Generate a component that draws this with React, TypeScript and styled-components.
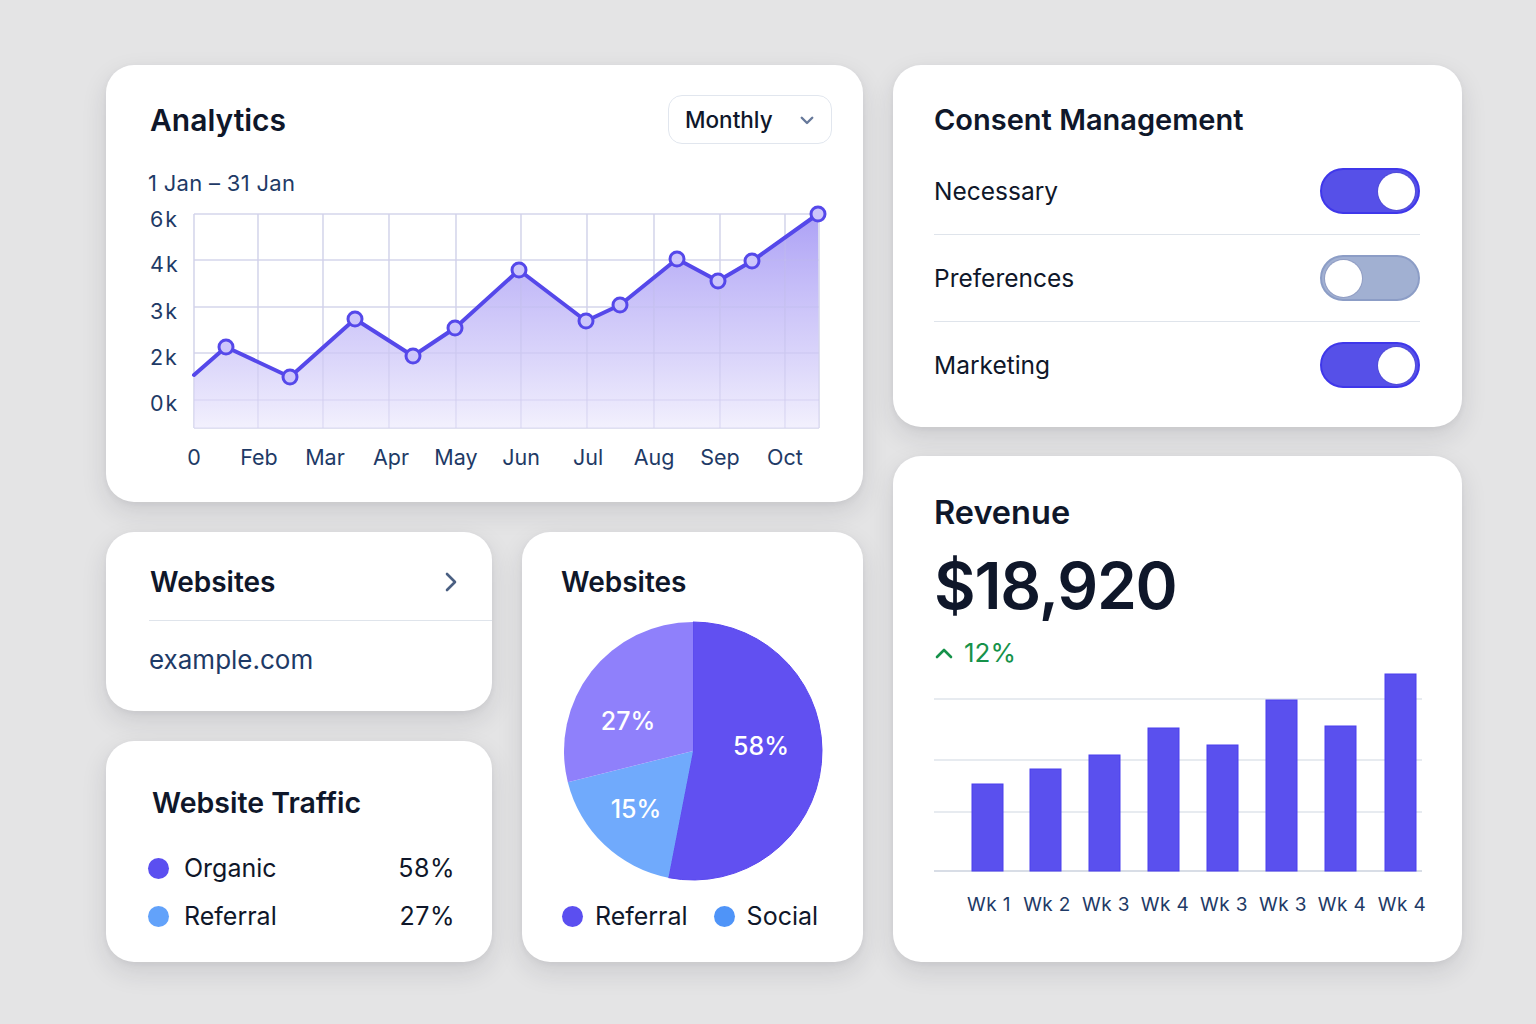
import React from "react";
import styled, { createGlobalStyle } from "styled-components";

const GlobalStyle = createGlobalStyle`
  html, body { margin: 0; padding: 0; }
  body {
    background: #e4e4e5;
    font-family: Inter, "Noto Sans", "Liberation Sans", sans-serif;
    color: #0f172a;
  }
  #root { min-height: 1024px; }
`;

const Page = styled.div`
  display: flex;
  gap: 30px;
  padding: 65px 0 0 106px;
  box-sizing: border-box;
  width: 1536px;
  height: 1024px;
`;

const Column = styled.div<{ $width: number; $gap: number }>`
  display: flex;
  flex-direction: column;
  width: ${(p) => p.$width}px;
  gap: ${(p) => p.$gap}px;
`;

const Row = styled.div<{ $gap: number }>`
  display: flex;
  gap: ${(p) => p.$gap}px;
`;

const Card = styled.div<{ $height: number; $width?: number }>`
  background: #ffffff;
  border-radius: 28px;
  box-shadow: 0 10px 26px rgba(30, 30, 50, 0.12), 0 2px 6px rgba(30, 30, 50, 0.05);
  height: ${(p) => p.$height}px;
  width: ${(p) => (p.$width ? `${p.$width}px` : "auto")};
  box-sizing: border-box;
  display: flex;
  flex-direction: column;
  overflow: hidden;
`;

const Title = styled.h2<{ $size?: number }>`
  margin: 0;
  font-size: ${(p) => p.$size ?? 29}px;
  font-weight: 600;
  color: #0f172a;
  line-height: 40px;
`;

/* ---------- Analytics ---------- */
const AnalyticsBody = styled.div`
  padding: 30px 31px 0 42px;
  display: flex;
  flex-direction: column;
`;

const HeaderRow = styled.div`
  display: flex;
  align-items: center;
  justify-content: space-between;
  height: 49px;
  padding-left: 2px;
`;

const Dropdown = styled.button`
  width: 164px;
  height: 49px;
  border: 1.5px solid #e1e6ee;
  border-radius: 14px;
  background: #fff;
  display: flex;
  align-items: center;
  justify-content: space-between;
  padding: 0 15px 0 16px;
  box-sizing: border-box;
  font-family: inherit;
  font-size: 22.5px;
  font-weight: 500;
  color: #0f172a;
  cursor: pointer;
`;

const Subtitle = styled.div`
  margin-top: 26px;
  font-size: 22px;
  letter-spacing: 0.3px;
  line-height: 26px;
  color: #1e3a66;
`;

const ChartSvg = styled.svg`
  display: block;
  margin-top: 4px;
  overflow: visible;
`;

const AxisText = styled.text`
  font-family: Inter, "Noto Sans", sans-serif;
  font-size: 21.5px;
  fill: #1e3a66;
`;

const yTicks = [
  { label: "6k", y: 19 },
  { label: "4k", y: 64 },
  { label: "3k", y: 111 },
  { label: "2k", y: 157 },
  { label: "0k", y: 203 },
];
const hLines = [14, 60, 107, 153, 200, 228];
const vLines = [46, 110, 175, 241, 308, 373, 439, 506, 572, 637, 671];
const xLabels = [
  { l: "0", x: 46 },
  { l: "Feb", x: 111 },
  { l: "Mar", x: 177 },
  { l: "Apr", x: 243 },
  { l: "May", x: 308 },
  { l: "Jun", x: 373 },
  { l: "Jul", x: 440 },
  { l: "Aug", x: 506 },
  { l: "Sep", x: 572 },
  { l: "Oct", x: 637 },
];
const points: [number, number][] = [
  [78, 147],
  [142, 177],
  [207, 119],
  [265, 156],
  [307, 128],
  [371, 70],
  [438, 121],
  [472, 105],
  [529, 59],
  [570, 81],
  [604, 61],
  [670, 14],
];

function LineChart() {
  const start: [number, number] = [46, 175];
  const all = [start, ...points];
  const line = all.map((p, i) => `${i ? "L" : "M"}${p[0]} ${p[1]}`).join(" ");
  const area = `${line} L671 228 L46 228 Z`;
  return (
    <ChartSvg width={684} height={275} viewBox="0 0 684 275">
      <defs>
        <linearGradient id="areaGrad" x1="0" y1="14" x2="0" y2="228" gradientUnits="userSpaceOnUse">
          <stop offset="0" stopColor="#a89cf5" stopOpacity="0.95" />
          <stop offset="0.55" stopColor="#c8c0f8" stopOpacity="0.8" />
          <stop offset="1" stopColor="#f1effd" stopOpacity="0.9" />
        </linearGradient>
      </defs>
      {hLines.map((y) => (
        <line key={`h${y}`} x1={46} x2={671} y1={y} y2={y} stroke="#dce1ec" strokeWidth={1.5} />
      ))}
      {vLines.map((x) => (
        <line key={`v${x}`} x1={x} x2={x} y1={14} y2={228} stroke="#dce1ec" strokeWidth={1.5} />
      ))}
      <path d={area} fill="url(#areaGrad)" />
      {hLines.map((y) => (
        <line key={`ho${y}`} x1={46} x2={671} y1={y} y2={y} stroke="#c9c6ea" strokeOpacity={0.45} strokeWidth={1.2} />
      ))}
      {vLines.map((x) => (
        <line key={`vo${x}`} x1={x} x2={x} y1={14} y2={228} stroke="#c9c6ea" strokeOpacity={0.45} strokeWidth={1.2} />
      ))}
      <path d={line} fill="none" stroke="#5548ea" strokeWidth={4} strokeLinejoin="round" strokeLinecap="round" />
      {points.map(([x, y]) => (
        <circle key={`${x}-${y}`} cx={x} cy={y} r={7} fill="#cdc6fb" stroke="#5548ea" strokeWidth={3} />
      ))}
      {yTicks.map((t) => (
        <AxisText key={t.label} x={2} y={t.y + 8} letterSpacing="2">
          {t.label}
        </AxisText>
      ))}
      {xLabels.map((t) => (
        <AxisText key={t.l} x={t.x} y={265} textAnchor="middle">
          {t.l}
        </AxisText>
      ))}
    </ChartSvg>
  );
}

/* ---------- Consent ---------- */
const ConsentBody = styled.div`
  padding: 35px 42px 0 41px;
  display: flex;
  flex-direction: column;
`;

const ToggleList = styled.div`
  margin-top: 8px;
  display: flex;
  flex-direction: column;
`;

const ToggleRow = styled.div<{ $divider: boolean }>`
  display: flex;
  align-items: center;
  justify-content: space-between;
  height: 86px;
  border-bottom: ${(p) => (p.$divider ? "1.5px solid #dfe4eb" : "none")};
  font-size: 24.5px;
  color: #0f172a;
`;

const Switch = styled.div<{ $on: boolean }>`
  width: 100px;
  height: 46px;
  border-radius: 23px;
  box-sizing: border-box;
  background: ${(p) => (p.$on ? "#5650e8" : "#a1b0d2")};
  border: 2px solid ${(p) => (p.$on ? "#3f37ea" : "#8c9dc6")};
  display: flex;
  align-items: center;
  justify-content: ${(p) => (p.$on ? "flex-end" : "flex-start")};
  padding: 0 3px;
`;

const Knob = styled.div`
  width: 37px;
  height: 37px;
  border-radius: 50%;
  background: #ffffff;
  box-shadow: 0 0 0 1px rgba(60, 60, 120, 0.15);
`;

/* ---------- Websites list ---------- */
const WebsitesHeader = styled.div`
  display: flex;
  align-items: center;
  justify-content: space-between;
  margin-left: 43px;
  padding: 30px 34px 18px 1px;
  border-bottom: 1.5px solid #dfe4eb;
`;

const LinkText = styled.div`
  padding: 19px 0 0 43px;
  font-size: 26px;
  line-height: 40px;
  color: #1e3a66;
`;

/* ---------- Traffic ---------- */
const TrafficBody = styled.div`
  padding: 42px 37px 0 42px;
  display: flex;
  flex-direction: column;
`;

const TrafficTitle = styled(Title)`
  margin-left: 4px;
`;

const TrafficList = styled.div`
  margin-top: 28px;
  display: flex;
  flex-direction: column;
  gap: 14px;
`;

const TrafficItem = styled.div`
  display: flex;
  align-items: center;
  height: 34px;
  font-size: 25px;
  color: #0f172a;
`;

const Dot = styled.span<{ $color: string }>`
  width: 21px;
  height: 21px;
  border-radius: 50%;
  background: ${(p) => p.$color};
  flex: none;
`;

const ItemLabel = styled.span`
  margin-left: 15px;
  flex: 1;
`;

const ItemValue = styled.span`
  letter-spacing: 0.5px;
`;

/* ---------- Pie ---------- */
const PieBody = styled.div`
  padding: 30px 0 0 39px;
  display: flex;
  flex-direction: column;
`;

const PieWrap = styled.div`
  display: flex;
  justify-content: center;
  margin: 19px 0 0 -39px;
`;

const PieText = styled.text`
  font-family: Inter, "Noto Sans", sans-serif;
  font-size: 25px;
  font-weight: 500;
  fill: #ffffff;
`;

const Legend = styled.div`
  display: flex;
  justify-content: center;
  gap: 26px;
  margin: 20px 0 0 -39px;
  padding-right: 5px;
`;

const LegendItem = styled.div`
  display: flex;
  align-items: center;
  gap: 12px;
  font-size: 25px;
  color: #0f172a;
`;

function polar(cx: number, cy: number, r: number, deg: number): [number, number] {
  const a = (deg * Math.PI) / 180;
  return [cx + r * Math.sin(a), cy - r * Math.cos(a)];
}

function slice(cx: number, cy: number, r: number, a0: number, a1: number) {
  const [x0, y0] = polar(cx, cy, r, a0);
  const [x1, y1] = polar(cx, cy, r, a1);
  const large = a1 - a0 > 180 ? 1 : 0;
  return `M${cx} ${cy} L${x0} ${y0} A${r} ${r} 0 ${large} 1 ${x1} ${y1} Z`;
}

function PieChart() {
  const c = 130;
  const r = 129;
  return (
    <svg width={260} height={260} viewBox="0 0 260 260">
      <path d={slice(c, c, r, 0, 191)} fill="#6150f1" stroke="#5a48ee" strokeWidth={1} />
      <path d={slice(c, c, r, 191, 256)} fill="#70aafc" />
      <path d={slice(c, c, r, 256, 360)} fill="#8f80fb" />
      <PieText x={198} y={134} textAnchor="middle">58%</PieText>
      <PieText x={65} y={109} textAnchor="middle">27%</PieText>
      <PieText x={73} y={197} textAnchor="middle">15%</PieText>
    </svg>
  );
}

/* ---------- Revenue ---------- */
const RevenueBody = styled.div`
  padding: 37px 0 0 41px;
  display: flex;
  flex-direction: column;
`;

const BigNumber = styled.div`
  margin-top: 18px;
  font-size: 64px;
  font-weight: 600;
  letter-spacing: -1.2px;
  line-height: 70px;
  color: #0f172a;
`;

const Change = styled.div`
  margin-top: 14px;
  display: flex;
  align-items: center;
  gap: 10px;
  font-size: 26px;
  line-height: 36px;
  color: #16924a;
`;

const BarSvg = styled.svg`
  display: block;
  margin-top: -6px;
  overflow: visible;
`;

const BarLabel = styled.text`
  font-family: Inter, "Noto Sans", sans-serif;
  font-size: 19px;
  fill: #1e3a66;
  letter-spacing: 0.4px;
`;

const bars = [
  { x: 38, top: 119, l: "Wk 1" },
  { x: 96, top: 104, l: "Wk 2" },
  { x: 155, top: 90, l: "Wk 3" },
  { x: 214, top: 63, l: "Wk 4" },
  { x: 273, top: 80, l: "Wk 3" },
  { x: 332, top: 35, l: "Wk 3" },
  { x: 391, top: 61, l: "Wk 4" },
  { x: 451, top: 9, l: "Wk 4" },
];

function BarChart() {
  return (
    <BarSvg width={500} height={255} viewBox="0 0 500 255">
      {[34, 95, 147].map((y) => (
        <line key={y} x1={0} x2={488} y1={y} y2={y} stroke="#dfe4eb" strokeWidth={1.5} />
      ))}
      <line x1={0} x2={488} y1={206} y2={206} stroke="#d8dde6" strokeWidth={2} />
      {bars.map((b, i) => (
        <rect
          key={i}
          x={b.x}
          y={b.top}
          width={31}
          height={206 - b.top}
          fill="#5a50ee"
          stroke="#4a3fee"
          strokeWidth={1}
        />
      ))}
      {bars.map((b, i) => (
        <BarLabel key={`l${i}`} x={b.x + 17} y={246} textAnchor="middle">
          {b.l}
        </BarLabel>
      ))}
    </BarSvg>
  );
}

export default function App() {
  return (
    <>
      <GlobalStyle />
      <Page>
        <Column $width={757} $gap={30}>
          <Card $height={437}>
            <AnalyticsBody>
              <HeaderRow>
                <Title $size={30}>Analytics</Title>
                <Dropdown>
                  Monthly
                  <svg width="18" height="18" viewBox="0 0 24 24" fill="none" stroke="#66789a" strokeWidth="3.2" strokeLinecap="round" strokeLinejoin="round">
                    <path d="M5 9l7 7 7-7" />
                  </svg>
                </Dropdown>
              </HeaderRow>
              <Subtitle>1 Jan – 31 Jan</Subtitle>
              <LineChart />
            </AnalyticsBody>
          </Card>
          <Row $gap={30}>
            <Column $width={386} $gap={30}>
              <Card $height={179}>
                <WebsitesHeader>
                  <Title $size={28}>Websites</Title>
                  <svg width="14" height="22" viewBox="0 0 14 22" fill="none" stroke="#4a5f82" strokeWidth="2.6" strokeLinecap="round" strokeLinejoin="round">
                    <path d="M3 3l8 8-8 8" />
                  </svg>
                </WebsitesHeader>
                <LinkText>example.com</LinkText>
              </Card>
              <Card $height={221}>
                <TrafficBody>
                  <TrafficTitle $size={28.5}>Website Traffic</TrafficTitle>
                  <TrafficList>
                    <TrafficItem>
                      <Dot $color="#5b4ff0" />
                      <ItemLabel>Organic</ItemLabel>
                      <ItemValue>58%</ItemValue>
                    </TrafficItem>
                    <TrafficItem>
                      <Dot $color="#62a2fa" />
                      <ItemLabel>Referral</ItemLabel>
                      <ItemValue>27%</ItemValue>
                    </TrafficItem>
                  </TrafficList>
                </TrafficBody>
              </Card>
            </Column>
            <Card $height={430} $width={341}>
              <PieBody>
                <Title $size={28}>Websites</Title>
                <PieWrap>
                  <PieChart />
                </PieWrap>
                <Legend>
                  <LegendItem>
                    <Dot $color="#5b4ff0" />
                    Referral
                  </LegendItem>
                  <LegendItem>
                    <Dot $color="#4f94f8" />
                    Social
                  </LegendItem>
                </Legend>
              </PieBody>
            </Card>
          </Row>
        </Column>
        <Column $width={569} $gap={29}>
          <Card $height={362}>
            <ConsentBody>
              <Title $size={29}>Consent Management</Title>
              <ToggleList>
                <ToggleRow $divider>
                  Necessary
                  <Switch $on>
                    <Knob />
                  </Switch>
                </ToggleRow>
                <ToggleRow $divider>
                  Preferences
                  <Switch $on={false}>
                    <Knob />
                  </Switch>
                </ToggleRow>
                <ToggleRow $divider={false}>
                  Marketing
                  <Switch $on>
                    <Knob />
                  </Switch>
                </ToggleRow>
              </ToggleList>
            </ConsentBody>
          </Card>
          <Card $height={506}>
            <RevenueBody>
              <Title $size={32.5}>Revenue</Title>
              <BigNumber>$18,920</BigNumber>
              <Change>
                <svg width="20" height="14" viewBox="0 0 20 14" fill="none" stroke="#16924a" strokeWidth="2.6" strokeLinecap="round" strokeLinejoin="round">
                  <path d="M3 11l7-7 7 7" />
                </svg>
                12%
              </Change>
              <BarChart />
            </RevenueBody>
          </Card>
        </Column>
      </Page>
    </>
  );
}
